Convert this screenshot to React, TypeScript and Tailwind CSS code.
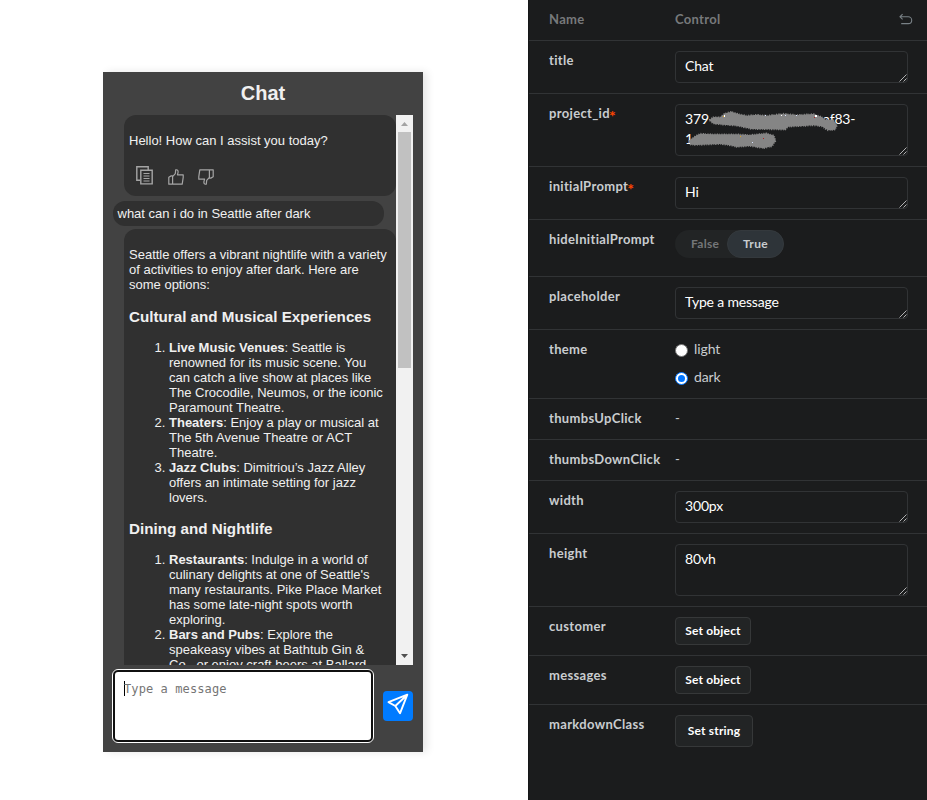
import type { ReactNode } from "react";

function CopyIcon() {
  return (
    <svg width="17" height="19" viewBox="0 0 17 19" fill="none" stroke="#a5a5a5" strokeWidth="1.4" className="block">
      <path d="M4 14.3H.8V.8h11.4V4" />
      <path d="M4.8 4.3h11.4v13.6H4.8z" />
      <path d="M7.5 7.5h6M7.5 10h6M7.5 12.5h6M7.5 15h6" strokeWidth="1.2" />
    </svg>
  );
}

function ThumbIcon({ down = false }: { down?: boolean }) {
  return (
    <svg
      width="16"
      height="16"
      viewBox="0 0 16 16"
      fill="none"
      stroke="#a5a5a5"
      strokeWidth="1.2"
      strokeLinejoin="round"
      className={down ? "block rotate-180" : "block"}
    >
      <path d="M.8 8.2 3.2 6.9h1.4v8.3H.8zM4.6 7.6 7.3 4.6 7.7.9c1.9-.6 2.7.8 2.3 2.7l-.6 2.2h5.8v2.6l-1 6.8H4.6" />
    </svg>
  );
}

function Grip() {
  return (
    <svg width="8" height="8" viewBox="0 0 8 8" stroke="#c4c4c4" strokeWidth="0.9" className="absolute right-0 bottom-0">
      <path d="M.5 7.5l7-7M4.5 7.5l3-3" />
    </svg>
  );
}

function Scribble() {
  return (
    <svg width="200" height="50" viewBox="0 0 200 50" className="absolute top-0 left-0">
      <g transform="translate(-6 -10) scale(0.33333)" fill="#858585" stroke="#858585" strokeWidth="5" strokeDasharray="3 4 4 3 2 5">
        <path d="M118 75 130 66 150 67 165 55 185 50 205 57 230 62 260 59 290 62 340 56 380 60 430 57 455 66 466 74 490 76 501 90 496 104 474 106 455 94 430 91 400 93 355 95 345 104 300 103 245 102 200 92 160 89 130 86z" />
        <path d="M56 138 75 124 90 116 130 118 200 118 240 120 290 115 312 122 317 137 306 154 280 160 240 153 200 156 180 151 150 147 80 150 62 149z" />
      </g>
      <g>
        <path d="M48 10h1v2h-1zM105 10h1v1h-1zM139 10h2v2h-2z" fill="#fff" />
        <path d="M89 10h1v1h-1zM109 10h1v1h-1zM120 10h1v1h-1zM76 37h1v1h-1z" fill="#d8e4ff" />
        <path d="M47 11h1v1h-1zM64 31h1v1h-1z" fill="#d9a020" />
        <path d="M138 12h1v1h-1zM87 33h1v1h-1z" fill="#b02020" />
      </g>
    </svg>
  );
}

function Field({ children, tall = false }: { children: ReactNode; tall?: boolean }) {
  return (
    <div
      className={`relative w-[233px] rounded-[4px] border border-[#313335] px-[9px] pt-1 text-[14px] leading-5 tracking-[-0.18px] text-white ${tall ? "h-[52px]" : "h-8"}`}
    >
      {children}
      <Grip />
    </div>
  );
}

function Row({ name, h, required = false, children, last = false }: { name: string; h: string; required?: boolean; children: ReactNode; last?: boolean }) {
  return (
    <div className={`flex pt-[10px] pl-5 ${h} ${last ? "" : "border-b border-[#313335]"}`}>
      <div className="-mt-px w-[126px] shrink-0 text-[13px] leading-5 font-bold tracking-[0.33px] text-[#c9cccf]">
        {name}
        {required && <span className="-ml-px inline-block h-5 align-top text-[16px] leading-[26px] tracking-normal text-[#ff4400]">*</span>}
      </div>
      <div>{children}</div>
    </div>
  );
}

function SetButton({ children, large = false }: { children: ReactNode; large?: boolean }) {
  return (
    <div
      className={`flex items-center justify-center rounded-[4px] border border-[#363839] bg-[#222425] text-[12px] font-bold tracking-[0.18px] text-white ${large ? "h-8 w-[78px]" : "h-7 w-[76px]"}`}
    >
      {children}
    </div>
  );
}

function Chat() {
  return (
    <div className="flex h-[680px] w-[320px] flex-col bg-[#424242] px-[10px] font-['Liberation_Sans',Arial,sans-serif] text-[13px] leading-[15px] text-[#f0f0f0] shadow-[4px_0px_8px_rgba(0,0,0,0.1)]">
      <div className="h-[43px] pt-[9px] text-center text-[20px] leading-6 font-bold">Chat</div>
      <div className="flex h-[550px]">
        <div className="w-[283px] overflow-hidden">
          <div className="ml-[11px] h-[81px] rounded-[12px] bg-[#303030] px-[5px] pt-[18px]">
            <p>Hello! How can I assist you today?</p>
            <div className="mt-[18px] flex pl-[6.5px]">
              <CopyIcon />
              <div className="mt-[3px] ml-[15px]"><ThumbIcon /></div>
              <div className="mt-[3px] ml-[14px]"><ThumbIcon down /></div>
            </div>
          </div>
          <div className="mt-[5px] h-[25px] w-[271px] rounded-[12px] bg-[#303030] pt-[5px] pl-[4.5px]">what can i do in Seattle after dark</div>
          <div className="mt-[3px] ml-[11px] rounded-t-[12px] bg-[#303030] px-[5px] pt-[18px]">
            <p>Seattle offers a vibrant nightlife with a variety<br />of activities to enjoy after dark. Here are<br />some options:</p>
            <h3 className="mt-[16px] text-[15.2px] leading-[17px] font-bold">Cultural and Musical Experiences</h3>
            <ol className="mt-[15px] list-decimal pl-[40px]">
              <li><b>Live Music Venues</b>: Seattle is<br />renowned for its music scene. You<br />can catch a live show at places like<br />The Crocodile, Neumos, or the iconic<br />Paramount Theatre.</li>
              <li><b>Theaters</b>: Enjoy a play or musical at<br />The 5th Avenue Theatre or ACT<br />Theatre.</li>
              <li><b>Jazz Clubs</b>: Dimitriou’s Jazz Alley<br />offers an intimate setting for jazz<br />lovers.</li>
            </ol>
            <h3 className="mt-[15px] text-[15.2px] leading-[17px] font-bold">Dining and Nightlife</h3>
            <ol className="mt-[15px] list-decimal pl-[40px]">
              <li><b>Restaurants</b>: Indulge in a world of<br />culinary delights at one of Seattle's<br />many restaurants. Pike Place Market<br />has some late-night spots worth<br />exploring.</li>
              <li><b>Bars and Pubs</b>: Explore the<br />speakeasy vibes at Bathtub Gin &amp;<br />Co., or enjoy craft beers at Ballard</li>
            </ol>
          </div>
        </div>
        <div className="flex w-[17px] flex-col items-center bg-[#f1f1f1]">
          <svg width="17" height="17" viewBox="0 0 17 17" fill="#a3a3a3" className="block"><path d="M5 11h7L8.5 7z" /></svg>
          <div className="h-[236px] w-[13px] bg-[#c1c1c1]" />
          <svg width="17" height="17" viewBox="0 0 17 17" fill="#505050" className="mt-auto block"><path d="M5 6h7L8.5 10z" /></svg>
        </div>
      </div>
      <div className="mt-1 -ml-px flex">
        <div className="h-[74px] w-[262px] rounded-[6px] border border-white bg-[#101010] p-[2px]">
          <div className="h-full rounded-[3px] bg-white pt-[9px] pl-[9px]">
            <div className="h-[15px] w-max border-l border-black font-['DejaVu_Sans_Mono',monospace] text-[12px] leading-[17px] tracking-[0.1px] text-[#757575]">
              <span className="-ml-px">Type a message</span>
            </div>
          </div>
        </div>
        <div className="mt-[22px] ml-[9px] h-[30px] w-[30px] rounded-[4px] bg-[#007bff]">
          <svg width="30" height="30" viewBox="0 0 30 30" fill="none" stroke="white" strokeWidth="1.9" strokeLinejoin="round" className="block">
            <path d="M24.3 3.7 5.5 11.2l6.8 3.8L17 22.3zM12.3 15 24.3 3.7" />
          </svg>
        </div>
      </div>
    </div>
  );
}

export default function App() {
  return (
    <div className="flex h-[800px] w-[927px] overflow-hidden bg-white">
      <div className="w-[528px] shrink-0 pt-[72px] pl-[103px]"><Chat /></div>
      <div className="w-[399px] border-l border-[#151617] bg-[#1b1c1d] font-[Lato,sans-serif]">
        <div className="flex h-[41px] border-b border-[#313335] pl-5 text-[13px] leading-[39px] font-bold tracking-[0.3px] text-[#77797b]">
          <div className="w-[126px]">Name</div>
          <div className="w-[224px]">Control</div>
          <svg width="14" height="14" viewBox="0 0 14 14" fill="none" stroke="#798186" strokeWidth="1.1" className="mt-[13px]">
            <path d="M3.6 1.2 1 3.8l2.6 2.6M1 3.8h8.3a3.4 3.4 0 0 1 0 6.8H2.2" />
          </svg>
        </div>
        <Row name="title" h="h-[53px]"><Field>Chat</Field></Row>
        <Row name="project_id" h="h-[73px]" required>
          <Field tall>
            <div className="flex"><span className="w-[138px]">379</span><span>af83-</span></div>
            <div>1</div>
            <Scribble />
          </Field>
        </Row>
        <Row name="initialPrompt" h="h-[53px]" required><Field>Hi</Field></Row>
        <Row name="hideInitialPrompt" h="h-[57px]">
          <div className="flex h-7 w-[109px] rounded-full bg-[#222425] text-[12px] leading-[28px] font-bold tracking-[0.3px]">
            <div className="w-[52px] pl-4 text-[#747678]">False</div>
            <div className="w-[57px] rounded-full border border-[#34393d] bg-[#2e3439] text-center leading-[26px] text-[#c9cccf]">True</div>
          </div>
        </Row>
        <Row name="placeholder" h="h-[53px]"><Field>Type a message</Field></Row>
        <Row name="theme" h="h-[69px]">
          <div className="-mt-px text-[14px] leading-5 tracking-[-0.1px] text-[#c9cccf]">
            <div className="flex items-center gap-[6px]"><div className="mt-[2px] h-[13px] w-[13px] rounded-full border border-[#767676] bg-white" />light</div>
            <div className="mt-2 flex items-center gap-[6px]"><div className="mt-[2px] flex h-[13px] w-[13px] items-center justify-center rounded-full border border-[#0075ff] bg-white"><div className="h-[7px] w-[7px] rounded-full bg-[#0075ff]" /></div>dark</div>
          </div>
        </Row>
        <Row name="thumbsUpClick" h="h-[41px]"><div className="-mt-px text-[13px] leading-5 text-[#c9cccf]">-</div></Row>
        <Row name="thumbsDownClick" h="h-[41px]"><div className="-mt-px text-[13px] leading-5 text-[#c9cccf]">-</div></Row>
        <Row name="width" h="h-[53px]"><Field>300px</Field></Row>
        <Row name="height" h="h-[73px]"><Field tall>80vh</Field></Row>
        <Row name="customer" h="h-[49px]"><SetButton>Set object</SetButton></Row>
        <Row name="messages" h="h-[49px]"><SetButton>Set object</SetButton></Row>
        <Row name="markdownClass" h="h-[60px]" last><SetButton large>Set string</SetButton></Row>
      </div>
    </div>
  );
}
